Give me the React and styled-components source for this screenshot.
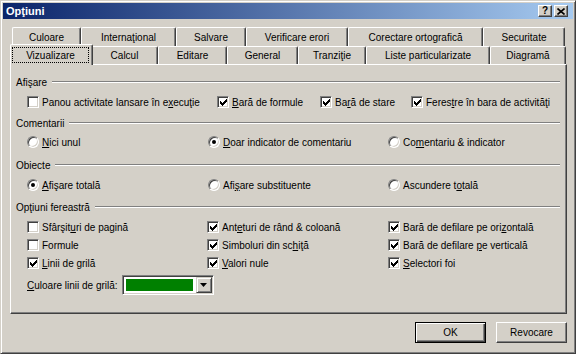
import styled, { createGlobalStyle } from "styled-components";

const face = "#d4d0c8";
const shadow = "#808080";
const dark = "#404040";

const GlobalStyle = createGlobalStyle`
  html, body { margin: 0; padding: 0; }
  body {
    background: ${face};
    font-family: "Liberation Sans", Arial, sans-serif;
    font-size: 10px;
    color: #000;
  }
`;

const Window = styled.div`
  box-sizing: border-box;
  width: 576px;
  height: 354px;
  padding: 2px;
  display: flex;
  flex-direction: column;
  background: ${face};
  border: 1px solid;
  border-color: ${face} ${dark} ${dark} ${face};
  box-shadow: inset 1px 1px #fff, inset -1px -1px ${shadow};
`;

const TitleBar = styled.div`
  height: 16px;
  display: flex;
  align-items: center;
  padding: 0 5px 0 3px;
  background: linear-gradient(to right, #0a246a, #a6caf0);
`;

const Title = styled.span`
  flex: 1;
  color: #fff;
  font-weight: bold;
  font-size: 11px;
`;

const CaptionButtons = styled.div`
  display: flex;
  gap: 2px;
`;

const CaptionButton = styled.div`
  box-sizing: border-box;
  width: 14px;
  height: 12px;
  display: flex;
  align-items: center;
  justify-content: center;
  background: ${face};
  border: 1px solid;
  border-color: #fff ${dark} ${dark} #fff;
  box-shadow: inset -1px -1px ${shadow};
  font-weight: bold;
  font-size: 10px;
  line-height: 1;
`;

const Body = styled.div`
  flex: 1;
  display: flex;
  flex-direction: column;
  padding: 8px 6px 0 7px;
`;

const TabStrip = styled.div`
  display: flex;
  flex-direction: column;
  padding-left: 2px;
`;

const TabRow = styled.div`
  display: flex;
  align-items: flex-end;
  height: ${(p) => p.$h}px;
`;

const Tab = styled.div`
  box-sizing: border-box;
  flex: none;
  width: ${(p) => p.$w}px;
  height: ${(p) => p.$h}px;
  display: flex;
  justify-content: center;
  padding-top: ${(p) => p.$pt}px;
  background: ${face};
  border-top: 1px solid #fff;
  border-left: 1px solid #fff;
  border-right: 1px solid ${dark};
  border-radius: 2px 2px 0 0;
  box-shadow: inset -1px 0 ${shadow};
  white-space: nowrap;
`;

const ActiveTab = styled(Tab)`
  position: relative;
  z-index: 1;
  margin: 0 -2px -1px -2px;
  padding: 2px 3px 2px 1px;
`;

const FocusLabel = styled.span`
  flex: 1;
  display: flex;
  align-items: center;
  justify-content: center;
  border: 1px dotted #000;
`;

const Panel = styled.div`
  box-sizing: border-box;
  height: 250px;
  display: flex;
  flex-direction: column;
  padding: 10px 6px 0 5px;
  border: 1px solid;
  border-color: #fff ${dark} ${dark} #fff;
  box-shadow: inset -1px -1px ${shadow};
`;

const GroupHead = styled.div`
  height: 14px;
  margin-top: ${(p) => p.$mt || 0}px;
  display: flex;
  align-items: center;
  gap: 5px;

  &::after {
    content: "";
    flex: 1;
    border-top: 1px solid ${shadow};
    border-bottom: 1px solid #fff;
  }
`;

const OptionGrid = styled.div`
  display: grid;
  grid-template-columns: ${(p) => p.$cols};
  grid-auto-rows: 14px;
  row-gap: 4px;
  margin-top: ${(p) => p.$mt}px;
  padding-left: 11px;
`;

const Item = styled.label`
  display: flex;
  align-items: center;
  gap: 3px;
  white-space: nowrap;

  u {
    text-decoration: underline;
    text-underline-offset: 1px;
  }
`;

const Box = styled.span`
  box-sizing: border-box;
  flex: none;
  width: 12px;
  height: 12px;
  display: flex;
  align-items: center;
  justify-content: center;
  background: #fff;
  border: 1px solid;
  border-color: ${shadow} #fff #fff ${shadow};
  box-shadow: inset 1px 1px ${dark}, inset -1px -1px ${face};
`;

const Round = styled(Box)`
  border-radius: 50%;
`;

const Dot = styled.span`
  width: 4px;
  height: 4px;
  border-radius: 50%;
  background: #000;
`;

const ColorRow = styled.div`
  display: flex;
  align-items: center;
  gap: 4px;
  margin-top: 5px;
  padding-left: 11px;
`;

const Combo = styled.div`
  box-sizing: border-box;
  width: 92px;
  height: 20px;
  display: flex;
  background: #fff;
  border: 1px solid;
  border-color: ${shadow} #fff #fff ${shadow};
  box-shadow: inset 1px 1px ${dark}, inset -1px -1px ${face};
  padding: 3px 1px 1px 3px;
`;

const Swatch = styled.span`
  flex: 1;
  margin: 0 3px 2px 0;
  background: #008000;
`;

const DropButton = styled.span`
  box-sizing: border-box;
  width: 16px;
  margin-top: -2px;
  display: flex;
  align-items: center;
  justify-content: center;
  background: ${face};
  border: 1px solid;
  border-color: ${face} ${dark} ${dark} ${face};
  box-shadow: inset 1px 1px #fff, inset -1px -1px ${shadow};
`;

const ButtonRow = styled.div`
  display: flex;
  justify-content: flex-end;
  gap: 10px;
  margin-top: 8px;
`;

const Button = styled.div`
  box-sizing: border-box;
  width: 71px;
  height: 21px;
  display: flex;
  align-items: center;
  justify-content: center;
  background: ${face};
  border: 1px solid;
  border-color: ${(p) =>
    p.$default ? "#000" : `#fff ${dark} ${dark} #fff`};
  box-shadow: ${(p) =>
    p.$default
      ? `inset 1px 1px #fff, inset -1px -1px ${dark}, inset -2px -2px ${shadow}`
      : `inset -1px -1px ${shadow}`};
`;

const tabsTop = [
  ["Culoare", 69],
  ["Internaţional", 95],
  ["Salvare", 70],
  ["Verificare erori", 102],
  ["Corectare ortografică", 135],
  ["Securitate", 82],
];

const tabsBottom = [
  ["Calcul", 67],
  ["Editare", 69],
  ["General", 71],
  ["Tranziţie", 68],
  ["Liste particularizate", 124],
  ["Diagramă", 76],
];

function Check({ on, children }) {
  return (
    <Item>
      <Box>
        {on && (
          <svg width="7" height="7" viewBox="0 0 7 7" shapeRendering="crispEdges">
            <path d="M0 2h1v1h1v1h1V3h1V2h1V1h1V0h1v3h-1v1h-1v1h-1v1h-1v1H2V6H1V5H0z" fill="#000" />
          </svg>
        )}
      </Box>
      <span>{children}</span>
    </Item>
  );
}

function Radio({ on, children }) {
  return (
    <Item>
      <Round>{on && <Dot />}</Round>
      <span>{children}</span>
    </Item>
  );
}

export default function App() {
  return (
    <>
      <GlobalStyle />
      <Window>
        <TitleBar>
          <Title>Opţiuni</Title>
          <CaptionButtons>
            <CaptionButton>?</CaptionButton>
            <CaptionButton>
              <svg width="8" height="7" viewBox="0 0 8 7">
                <path d="M0.5 0.5L7.5 6.5M7.5 0.5L0.5 6.5" stroke="#000" strokeWidth="1.6" />
              </svg>
            </CaptionButton>
          </CaptionButtons>
        </TitleBar>

        <Body>
          <TabStrip>
            <TabRow $h={19}>
              {tabsTop.map(([label, w]) => (
                <Tab key={label} $w={w} $h={19} $pt={4}>
                  {label}
                </Tab>
              ))}
            </TabRow>
            <TabRow $h={18}>
              <ActiveTab $w={83} $h={21}>
                <FocusLabel>Vizualizare</FocusLabel>
              </ActiveTab>
              {tabsBottom.map(([label, w]) => (
                <Tab key={label} $w={w} $h={18} $pt={3}>
                  {label}
                </Tab>
              ))}
            </TabRow>
          </TabStrip>

          <Panel>
            <GroupHead>Afişare</GroupHead>
            <OptionGrid $mt={6} $cols="190px 103px 91px auto">
              <Check>Panou activitate lansare în e<u>x</u>ecuţie</Check>
              <Check on><u>B</u>ară de formule</Check>
              <Check on>Ba<u>r</u>ă de stare</Check>
              <Check on>Feres<u>t</u>re în bara de activităţi</Check>
            </OptionGrid>

            <GroupHead $mt={7}>Comentarii</GroupHead>
            <OptionGrid $mt={5} $cols="181px 180px auto">
              <Radio><u>N</u>ici unul</Radio>
              <Radio on><u>D</u>oar indicator de comentariu</Radio>
              <Radio>Co<u>m</u>entariu &amp; indicator</Radio>
            </OptionGrid>

            <GroupHead $mt={9}>Obiecte</GroupHead>
            <OptionGrid $mt={6} $cols="181px 180px auto">
              <Radio on><u>A</u>fişare totală</Radio>
              <Radio>Afi<u>ş</u>are substituente</Radio>
              <Radio>Ascundere t<u>o</u>tală</Radio>
            </OptionGrid>

            <GroupHead $mt={8}>Opţiuni fereastră</GroupHead>
            <OptionGrid $mt={6} $cols="180px 181px auto">
              <Check>Sfârşit<u>u</u>ri de pagină</Check>
              <Check on>Ant<u>e</u>turi de rând &amp; coloană</Check>
              <Check on>Bară de defilare pe ori<u>z</u>ontală</Check>
              <Check>Formule</Check>
              <Check on>Simboluri din sc<u>h</u>iţă</Check>
              <Check on>Bară de defilare <u>p</u>e verticală</Check>
              <Check on><u>L</u>inii de grilă</Check>
              <Check on><u>V</u>alori nule</Check>
              <Check on><u>S</u>electori foi</Check>
            </OptionGrid>

            <ColorRow>
              <span><u>C</u>uloare linii de grilă:</span>
              <Combo>
                <Swatch />
                <DropButton>
                  <svg width="7" height="4" viewBox="0 0 7 4">
                    <path d="M0 0h7L3.5 4z" fill="#000" />
                  </svg>
                </DropButton>
              </Combo>
            </ColorRow>
          </Panel>

          <ButtonRow>
            <Button $default>OK</Button>
            <Button>Revocare</Button>
          </ButtonRow>
        </Body>
      </Window>
    </>
  );
}
